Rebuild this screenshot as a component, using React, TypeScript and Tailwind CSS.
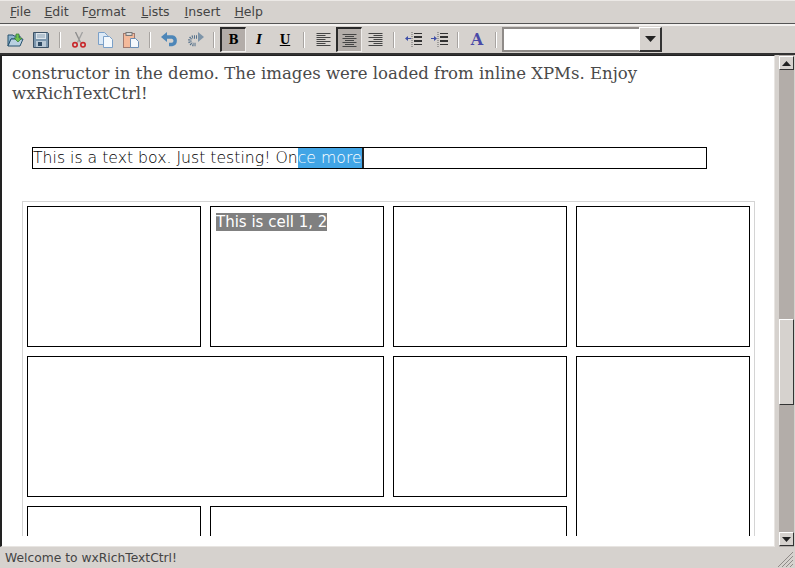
import React from "react";

const Sep = () => <div className="w-[2px] h-[16px] mx-[5px] border-l border-[#a8a4a1] bg-white" />;

function Btn({ children, active }: { children: React.ReactNode; active?: boolean }) {
  return (
    <div
      className={
        active
          ? "w-[26px] h-[25px] flex items-center justify-center bg-[#b3ada9] border-l-2 border-t-2 border-[#2a2a2a] border-r border-b border-r-[#f0eeec] border-b-[#f0eeec]"
          : "w-[26px] h-[25px] flex items-center justify-center"
      }
    >
      {children}
    </div>
  );
}

const Lines = ({ align }: { align: "l" | "c" | "r" }) => {
  const rows = [14, 9, 14, 9, 14, 9, 14];
  return (
    <svg width="15" height="13" viewBox="0 0 15 13">
      {rows.map((w, i) => {
        const x = align === "l" ? 0.5 : align === "c" ? (15 - w) / 2 : 14.5 - w;
        return <rect key={i} x={x} y={i * 2} width={w} height="1" fill="#444" />;
      })}
    </svg>
  );
};

const Indent = ({ dir }: { dir: "l" | "r" }) => (
  <svg width="17" height="16" viewBox="0 0 17 16">
    <path d="M7 0v16" stroke="#666" strokeDasharray="1 1" />
    <rect x="9" y="1" width="8" height="1" fill="#333" />
    <rect x="9" y="4" width="8" height="2" fill="#333" />
    <rect x="9" y="8" width="8" height="2" fill="#333" />
    <rect x="9" y="12" width="8" height="1" fill="#333" />
    {dir === "l" ? (
      <path d="M0 6.500 3 4v2h3v1H3v2z" fill="#3f4fa8" />
    ) : (
      <path d="M0 6h3V4l3 2.500L3 9V7H0z" fill="#3f4fa8" />
    )}
  </svg>
);

const Open = () => (
  <svg width="17" height="16" viewBox="0 0 17 16">
    <path d="M1 3h5l1 1h6v3H4L1 14z" fill="#8fb4cf" stroke="#27526f" />
    <path d="M1 14 4 7h12l-3 7z" fill="#b9d0e0" stroke="#27526f" />
    <path d="M9 2h3v4h3l-4 4-4-4h2z" fill="#6fc24f" stroke="#2f7a35" strokeWidth="0.7" />
  </svg>
);

const Save = () => (
  <svg width="16" height="16" viewBox="0 0 16 16">
    <path d="M.5.5h14l1 1v14H.5z" fill="#7c96ad" stroke="#3d5266" />
    <rect x="3" y="1" width="10" height="6" fill="#dfe6ec" />
    <rect x="4" y="2.500" width="8" height="1" fill="#8aa0b3" />
    <rect x="4" y="4.500" width="8" height="1" fill="#8aa0b3" />
    <rect x="3" y="9" width="10" height="6" fill="#b9c8d5" />
    <rect x="5" y="10" width="4" height="4" fill="#2f4a63" />
  </svg>
);

const Cut = () => (
  <svg width="14" height="16" viewBox="0 0 14 16" fill="none">
    <path d="M3.500 0 8.500 10.500" stroke="#8a8a8a" strokeWidth="1.300" />
    <path d="M10.500 0 5.500 10.500" stroke="#a0a0a0" strokeWidth="1.300" />
    <circle cx="3" cy="12.800" r="2.200" stroke="#c8262a" strokeWidth="1.600" />
    <circle cx="11" cy="12.800" r="2.200" stroke="#c8262a" strokeWidth="1.600" />
  </svg>
);

const Copy = () => (
  <svg width="15" height="16" viewBox="0 0 15 16">
    <path d="M.5.500h6l3 3v9h-9z" fill="#dce9f6" stroke="#7ba0c8" />
    <path d="M5.500 4.500h6l3 3v8h-9z" fill="#f4f8fc" stroke="#7ba0c8" />
  </svg>
);

const Paste = () => (
  <svg width="16" height="16" viewBox="0 0 16 16">
    <rect x="0.500" y="1.500" width="11" height="14" fill="#f4b99a" stroke="#9f7a70" />
    <rect x="3" y="0.500" width="6" height="3" fill="#d8d8d8" stroke="#777" />
    <path d="M7.500 6.500h5l3 3v6h-8z" fill="#f5f8fb" stroke="#6d8fb5" />
  </svg>
);

const Undo = () => (
  <svg width="17" height="15" viewBox="0 0 17 15">
    <path d="M4 5h7a3.800 3.800 0 0 1 0 7.500H8" fill="none" stroke="#4d86b8" strokeWidth="3.400" />
    <path d="M6 0v10L0 5z" fill="#4d86b8" />
  </svg>
);

const Redo = () => (
  <svg width="17" height="15" viewBox="0 0 17 15">
    <g fill="none" stroke="#54708a" strokeWidth="3.400" strokeDasharray="1 1">
      <path d="M12 5H6a3.800 3.800 0 0 0 0 7.500h3" />
    </g>
    <path d="M11 0v10l6-5z" fill="#7d94a8" />
  </svg>
);

const Cell = ({ className, children }: { className?: string; children?: React.ReactNode }) => (
  <div className={"border border-black " + (className ?? "")}>{children}</div>
);

export default function App() {
  return (
    <div className="w-[795px] h-[568px] bg-[#d6d2ce] flex flex-col overflow-hidden font-['DejaVu_Sans',sans-serif] text-[#2c2c2c]">
      <div className="h-[24px] shrink-0 flex items-center pl-[3px] text-[12.5px] text-[#444] border-b border-[#555] border-t-[1px] border-t-[#ece9e6]">
        <span className="px-[7px]"><u>F</u>ile</span>
        <span className="px-[6.500px]"><u>E</u>dit</span>
        <span className="pl-[6.500px] pr-[8.500px]">F<u>o</u>rmat</span>
        <span className="pl-[7px] pr-[8px]"><u>L</u>ists</span>
        <span className="px-[7px]"><u>I</u>nsert</span>
        <span className="px-[7px]"><u>H</u>elp</span>
      </div>
      <div className="h-[31px] shrink-0 flex items-center pl-[2px] border-t-2 border-t-[#f4f2f0] border-b-2 border-b-[#333]">
        <Btn><Open /></Btn>
        <Btn><Save /></Btn>
        <Sep />
        <Btn><Cut /></Btn>
        <Btn><Copy /></Btn>
        <Btn><Paste /></Btn>
        <Sep />
        <Btn><Undo /></Btn>
        <Btn><Redo /></Btn>
        <Sep />
        <Btn active><span className="font-['DejaVu_Serif',serif] font-bold text-[12px] text-black">B</span></Btn>
        <Btn><span className="font-['DejaVu_Serif',serif] font-bold italic text-[12px] text-black">I</span></Btn>
        <Btn><span className="font-['DejaVu_Serif',serif] font-bold underline text-[12px] text-black">U</span></Btn>
        <Sep />
        <Btn><Lines align="l" /></Btn>
        <Btn active><Lines align="c" /></Btn>
        <Btn><Lines align="r" /></Btn>
        <Sep />
        <Btn><Indent dir="l" /></Btn>
        <Btn><Indent dir="r" /></Btn>
        <Sep />
        <Btn><span className="font-['DejaVu_Serif',serif] font-bold text-[16px] text-[#4a4aa8]">A</span></Btn>
        <Sep />
        <div className="w-[137px] h-[25px] bg-white border-2 border-[#8f8b88] border-r-0" />
        <div className="w-[23px] h-[25px] flex items-center justify-center border-t border-l border-white border-r-2 border-b-2 border-r-[#333] border-b-[#333]">
          <svg width="11" height="6" viewBox="0 0 11 6"><path d="M0 0h11L5.500 6z" fill="#222" /></svg>
        </div>
      </div>
      <div className="flex-1 min-h-0 flex">
        <div className="flex-1 min-w-0 flex flex-col bg-white border-l-2 border-t border-l-[#222] border-t-[#222] border-r border-r-[#e8e5e2] border-b border-b-[#e8e5e2]">
          <div className="flex-1 min-h-0 overflow-hidden">
            <p className="ml-[10px] mt-[8px] mb-0 w-[720px] font-['DejaVu_Serif',serif] text-[16.550px] leading-[20px] text-[#4a4a4a]">
              constructor in the demo. The images were loaded from inline XPMs. Enjoy<br />wxRichTextCtrl!
            </p>
            <div className="ml-[30px] mt-[43px] w-[675px] h-[22px] border border-black flex items-center font-extralight text-[15.700px] leading-[20px] text-black whitespace-nowrap">
              <span>This is a text box. Just testing! On</span>
              <span className="bg-[#41a5e6] text-white font-light">ce more</span>
              <span className="w-[2px] h-[20px] shrink-0 bg-[#222]" />
            </div>
            <div className="ml-[20px] mt-[32px] w-[733px] border border-[#d4d4d4] border-b-0 pt-[4px] pl-[4px] grid grid-cols-[174px_174px_174px_174px] grid-rows-[141px_141px_141px] gap-[9px]">
              <Cell />
              <Cell>
                <div className="mt-[6px] ml-[5px] inline-block bg-[#808080] text-white text-[15px] leading-[18px]">This is cell 1, 2</div>
              </Cell>
              <Cell />
              <Cell />
              <Cell className="col-span-2" />
              <Cell />
              <Cell className="row-span-2" />
              <Cell />
              <Cell className="col-span-2" />
            </div>
          </div>
          <div className="h-[10px] shrink-0 bg-white" />
        </div>
        <div className="w-[20px] shrink-0 pl-[4px] pr-[1px] flex">
          <div className="flex-1 flex flex-col bg-[#b3ada9] pt-[1px] pb-[1px]">
            <div className="h-[14px] shrink-0 bg-[#d6d2ce] flex items-center justify-center border-t border-l border-white border-r border-b border-r-[#333] border-b-[#333]">
              <svg width="9" height="5" viewBox="0 0 9 5"><path d="M4.500 0 9 5H0z" fill="#222" /></svg>
            </div>
            <div className="h-[249px] shrink-0" />
            <div className="h-[86px] shrink-0 bg-[#d6d2ce] border-t border-l border-white border-r border-b border-r-[#333] border-b-[#333]" />
            <div className="flex-1" />
            <div className="h-[14px] shrink-0 bg-[#d6d2ce] flex items-center justify-center border-t border-l border-white border-r border-b border-r-[#333] border-b-[#333]">
              <svg width="9" height="5" viewBox="0 0 9 5"><path d="M0 0h9L4.500 5z" fill="#222" /></svg>
            </div>
          </div>
        </div>
      </div>
      <div className="h-[21px] shrink-0 relative flex items-center pl-[5px] pt-[2px] text-[12.300px] text-[#444]">
        Welcome to wxRichTextCtrl!
        <svg className="absolute right-[2px] bottom-[1px]" width="15" height="15" viewBox="0 0 15 15">
          <path d="M0 15 15 0M4 15 15 4M8 15 15 8M12 15l3-3" stroke="#8f8b88" strokeWidth="1" />
        </svg>
      </div>
    </div>
  );
}
